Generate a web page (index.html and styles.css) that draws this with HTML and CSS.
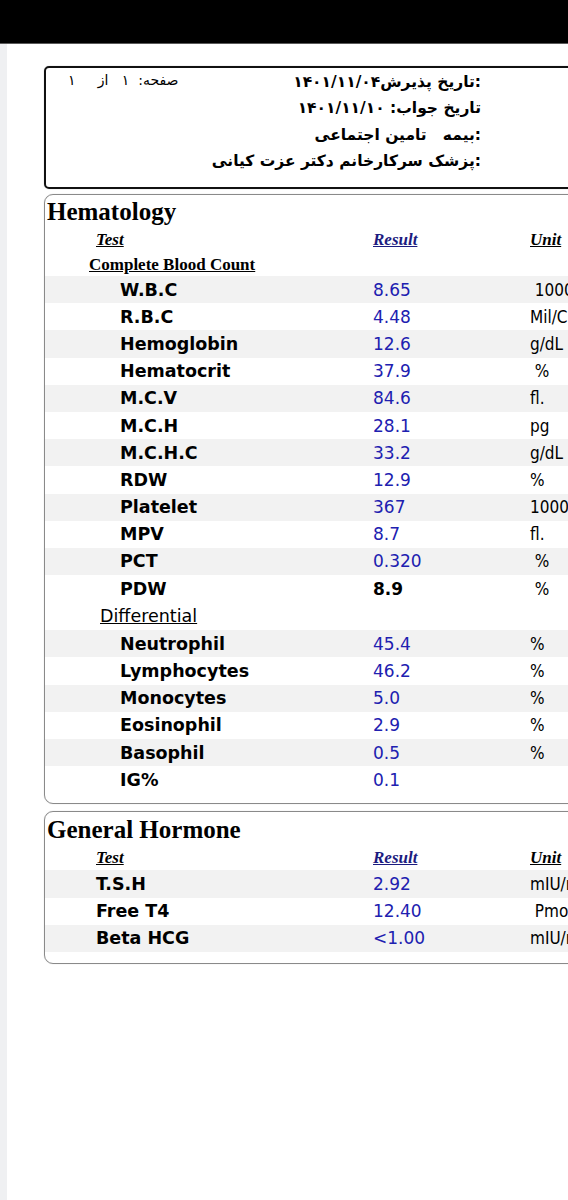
FILE: index.html
```html
<!DOCTYPE html>
<html lang="en">
<head>
<meta charset="utf-8">
<title>Lab report</title>
<link rel="stylesheet" href="styles.css">
</head>
<body>
<div class="topbar"></div>
<div class="screen">
  <div class="gutter"></div>
  <div class="page">
    <div class="hdr-box">
      <div class="hdr-inner">
        <div class="pageno" dir="rtl">صفحه:&nbsp;&nbsp;۱&nbsp;&nbsp;&nbsp;از&nbsp;&nbsp;&nbsp;&nbsp;&nbsp;۱</div>
        <div class="hdr-lines" dir="rtl">
          <div>:تاریخ پذیرش۱۴۰۱/۱۱/۰۴</div>
          <div>تاریخ جواب: ۱۴۰۱/۱۱/۱۰</div>
          <div>:بیمه&nbsp;&nbsp;&nbsp;تامین اجتماعی</div>
          <div>:پزشک سرکارخانم دکتر عزت کیانی</div>
        </div>
      </div>
    </div>

    <section class="panel panel-hem">
      <h2 class="panel-title">Hematology</h2>
      <div class="row head">
        <span class="c-name">Test</span>
        <span class="c-res">Result</span>
        <span class="c-unit">Unit</span>
      </div>
      <div class="group">Complete Blood Count</div>
      <div class="row stripe"><span class="c-name">W.B.C</span><span class="c-res">8.65</span><span class="c-unit">&nbsp;1000/uL</span></div>
      <div class="row"><span class="c-name">R.B.C</span><span class="c-res">4.48</span><span class="c-unit">Mil/Cumm</span></div>
      <div class="row stripe"><span class="c-name">Hemoglobin</span><span class="c-res">12.6</span><span class="c-unit">g/dL</span></div>
      <div class="row"><span class="c-name">Hematocrit</span><span class="c-res">37.9</span><span class="c-unit">&nbsp;%</span></div>
      <div class="row stripe"><span class="c-name">M.C.V</span><span class="c-res">84.6</span><span class="c-unit">fl.</span></div>
      <div class="row"><span class="c-name">M.C.H</span><span class="c-res">28.1</span><span class="c-unit">pg</span></div>
      <div class="row stripe"><span class="c-name">M.C.H.C</span><span class="c-res">33.2</span><span class="c-unit">g/dL</span></div>
      <div class="row"><span class="c-name">RDW</span><span class="c-res">12.9</span><span class="c-unit">%</span></div>
      <div class="row stripe"><span class="c-name">Platelet</span><span class="c-res">367</span><span class="c-unit">1000/uL</span></div>
      <div class="row"><span class="c-name">MPV</span><span class="c-res">8.7</span><span class="c-unit">fl.</span></div>
      <div class="row stripe"><span class="c-name">PCT</span><span class="c-res">0.320</span><span class="c-unit">&nbsp;%</span></div>
      <div class="row"><span class="c-name">PDW</span><span class="c-res bold">8.9</span><span class="c-unit">&nbsp;%</span></div>
      <div class="subgroup"><span>Differential</span></div>
      <div class="row stripe"><span class="c-name">Neutrophil</span><span class="c-res">45.4</span><span class="c-unit">%</span></div>
      <div class="row"><span class="c-name">Lymphocytes</span><span class="c-res">46.2</span><span class="c-unit">%</span></div>
      <div class="row stripe"><span class="c-name">Monocytes</span><span class="c-res">5.0</span><span class="c-unit">%</span></div>
      <div class="row"><span class="c-name">Eosinophil</span><span class="c-res">2.9</span><span class="c-unit">%</span></div>
      <div class="row stripe"><span class="c-name">Basophil</span><span class="c-res">0.5</span><span class="c-unit">%</span></div>
      <div class="row"><span class="c-name">IG%</span><span class="c-res">0.1</span><span class="c-unit"></span></div>
    </section>

    <section class="panel panel-hor">
      <h2 class="panel-title">General Hormone</h2>
      <div class="row head">
        <span class="c-name">Test</span>
        <span class="c-res">Result</span>
        <span class="c-unit">Unit</span>
      </div>
      <div class="row stripe"><span class="c-name">T.S.H</span><span class="c-res">2.92</span><span class="c-unit">mIU/ml</span></div>
      <div class="row"><span class="c-name">Free T4</span><span class="c-res">12.40</span><span class="c-unit">&nbsp;Pmol/L</span></div>
      <div class="row stripe"><span class="c-name">Beta HCG</span><span class="c-res">&lt;1.00</span><span class="c-unit">mIU/ml</span></div>
    </section>
  </div>
</div>
</body>
</html>
```

FILE: styles.css
```css
html, body {
  margin: 0;
  padding: 0;
  background: #ffffff;
  overflow: hidden;
}

body {
  width: 568px;
  height: 1200px;
  font-family: "DejaVu Sans", sans-serif;
  color: #000;
}

.topbar {
  height: 43px;
  background: #000;
  border-bottom: 1px solid #5a5a5a;
}

.screen {
  display: flex;
  height: 1156px;
}

.gutter {
  width: 7px;
  flex: none;
  background: #eff0f2;
}

.page {
  flex: 1;
  overflow: hidden;
  background: #fff;
}

/* header box */
.hdr-box {
  margin: 22px 0 0 37px;
  width: 620px;
  height: 119px;
  border: 2px solid #111;
  border-radius: 5px;
  box-shadow: 0 0 1px rgba(0,0,0,0.4);
}

.hdr-inner {
  width: 413px;
  padding-left: 22px;
  display: flex;
  justify-content: space-between;
  align-items: flex-start;
}

.pageno {
  font-family: "DejaVu Sans", sans-serif;
  font-size: 14px;
  line-height: 25px;
  white-space: nowrap;
}

.hdr-lines {
  padding-top: 1px;
  font-family: "DejaVu Sans", sans-serif;
  font-weight: bold;
  font-size: 15.5px;
  line-height: 26.3px;
  text-align: right;
  white-space: nowrap;
}

/* panels */
.panel {
  margin-left: 37px;
  width: 620px;
  border: 1px solid #8a8a8a;
  border-radius: 9px;
  padding-bottom: 10px;
  box-shadow: 0 0 1px rgba(0,0,0,0.25);
}

.panel-hem {
  margin-top: 5px;
}

.panel-hor {
  margin-top: 7px;
  padding-bottom: 11px;
}

.panel-title {
  margin: 0;
  padding-left: 2px;
  height: 32px;
  line-height: 34px;
  font-family: "Liberation Serif", serif;
  font-weight: bold;
  font-size: 25px;
}

.panel-hor .panel-title {
  line-height: 36px;
  height: 33px;
}

.row {
  display: grid;
  grid-template-columns: 328px 157px 1fr;
  height: 27.2px;
  align-items: center;
  white-space: nowrap;
}

.row.stripe {
  background: #f2f2f2;
}

.c-name {
  padding-left: 75px;
  font-family: "DejaVu Sans", sans-serif;
  font-weight: bold;
  font-size: 17.5px;
}

.panel-hor .c-name {
  padding-left: 51px;
}

.c-res {
  font-family: "DejaVu Sans", sans-serif;
  font-size: 17px;
  color: #2020b0;
}

.c-res.bold {
  color: #000;
  font-weight: bold;
}

.c-unit {
  font-family: "DejaVu Sans Condensed", "DejaVu Sans", sans-serif;
  font-size: 17px;
  color: #000;
}

.row.head {
  height: 25px;
}

.row.head span {
  padding-left: 0;
  font-family: "Liberation Serif", serif;
  font-weight: bold;
  font-style: italic;
  font-size: 17px;
  text-decoration: underline;
  color: #000;
}

.row.head .c-name {
  padding-left: 51px;
}

.row.head .c-res {
  color: #1c1c80;
}

.group {
  height: 24px;
  line-height: 26px;
  padding-left: 44px;
  font-family: "Liberation Serif", serif;
  font-weight: bold;
  font-size: 17px;
  text-decoration: underline;
}

.subgroup {
  height: 28px;
  line-height: 28px;
  padding-left: 55px;
  font-family: "DejaVu Sans", sans-serif;
  font-size: 17.5px;
  text-decoration: underline;
}
```
